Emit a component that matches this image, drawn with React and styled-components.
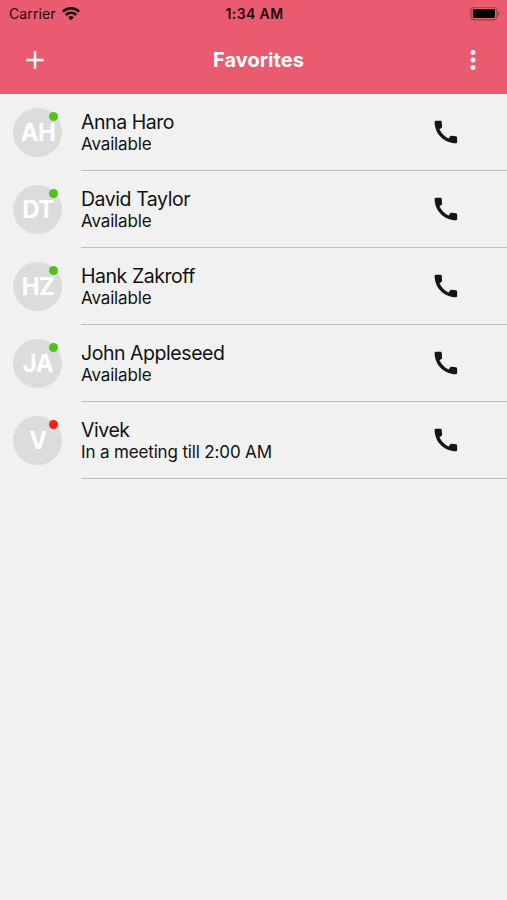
import React from 'react'
import styled, { createGlobalStyle } from 'styled-components';
import { MdAdd, MdMoreVert } from 'react-icons/md';

const GlobalStyle = createGlobalStyle`
  * {
    box-sizing: border-box;
  }

  body {
    margin: 0;
    background: #f1f1f1;
    font-family: Inter, "Liberation Sans", sans-serif;
  }

  p, h1, ul {
    margin: 0;
    padding: 0;
  }
`;

const Screen = styled.div`
  width: 507px;
  min-height: 900px;
  background: #f1f1f1;
  color: #111;
`;

const Header = styled.header`
  height: 94px;
  background: #ea5b70;
`;

const StatusBar = styled.div`
  display: grid;
  grid-template-columns: 1fr auto 1fr;
  align-items: center;
  height: 27px;
  padding: 0 7px 0 9px;
  color: #1c0a0d;
  font-size: 14px;
  line-height: 18px;
`;

const Carrier = styled.div`
  display: flex;
  align-items: center;
  gap: 6px;
  letter-spacing: 0.1px;
`;

const Time = styled.div`
  font-weight: 600;
  letter-spacing: 0.4px;
`;

const Battery = styled.svg`
  justify-self: end;
`;

const Toolbar = styled.div`
  display: grid;
  grid-template-columns: 30px 1fr 30px;
  align-items: center;
  height: 65px;
  padding: 0 19px 0 20px;
  color: #fff;
`;

const Title = styled.h1`
  padding-left: 9px;
  font-size: 20px;
  font-weight: 700;
  letter-spacing: 0.05px;
  line-height: 26px;
  text-align: center;
`;

const IconButton = styled.button`
  display: flex;
  padding: 0;
  border: 0;
  background: none;
  color: inherit;

  svg {
    width: 30px;
    height: 30px;
  }
`;

const List = styled.ul`
  list-style: none;
`;

const Row = styled.li`
  display: flex;
  height: 77px;
  padding-left: 13px;
`;

const Avatar = styled.div`
  position: relative;
  display: flex;
  align-items: center;
  justify-content: center;
  width: 49px;
  height: 49px;
  margin: 14px 19px 0 0;
  padding-left: 1px;
  border-radius: 50%;
  background: #dcdcdc;
  color: #fff;
  font-size: 24px;
  font-weight: 700;
  letter-spacing: -0.6px;
`;

const Presence = styled.span`
  position: absolute;
  top: 4px;
  right: 4px;
  width: 9px;
  height: 9px;
  border-radius: 50%;
  background: ${({ $busy }) => ($busy ? '#fd1d12' : '#4fc31c')};
`;

const Details = styled.div`
  display: flex;
  flex: 1;
  justify-content: space-between;
  padding: 16px 46.5px 0 0;
  border-bottom: 1px solid #bdbdbd;
`;

const Name = styled.p`
  font-size: 19.5px;
  letter-spacing: -0.45px;
  line-height: 24px;
`;

const Status = styled.p`
  font-size: 17px;
  letter-spacing: -0.15px;
  line-height: 21px;
`;

const CallButton = styled(IconButton)`
  align-self: flex-start;
  margin-top: 7px;
  color: #161616;
`;

const contacts = [
  { initials: 'AH', name: 'Anna Haro', status: 'Available' },
  { initials: 'DT', name: 'David Taylor', status: 'Available' },
  { initials: 'HZ', name: 'Hank Zakroff', status: 'Available' },
  { initials: 'JA', name: 'John Appleseed', status: 'Available' },
  { initials: 'V', name: 'Vivek', status: 'In a meeting till 2:00 AM', busy: true },
];

const WifiIcon = () => (
  <svg width="18" height="14" viewBox="0 0 18 14" fill="none" stroke="#14060a" strokeWidth="2.5">
    <path d="M0.9 4.6a11.6 11.6 0 0 1 16.2 0" />
    <path d="M3.8 8a7.4 7.4 0 0 1 10.4 0" />
    <path d="M6.2 10.4a4 4 0 0 1 5.6 0L9 13.3z" fill="#14060a" stroke="none" />
  </svg>
)

const BatteryIcon = () => (
  <Battery width="30" height="14" viewBox="0 0 30 14">
    <rect x="0.9" y="0.1" width="26" height="12.8" rx="3.8" fill="none" stroke="#94404d" strokeWidth="1.2" />
    <rect x="2.9" y="1.9" width="22" height="9.2" rx="1.4" fill="#000" />
    <path d="M27.8 4.2a2.5 2.5 0 0 1 0 4.6z" fill="#94404d" />
  </Battery>
)

const PhoneIcon = () => (
  <svg viewBox="0 0 24 24" fill="currentColor">
    <path d="M2.9 4Q2.9 3 3.9 3H7.7Q8.5 3 8.6 3.9L8.9 7.5Q8.9 8.3 8.3 8.8L6.8 9.8C8.3 13 11 15.8 14.2 17.2L15.2 15.6Q15.6 14.9 16.4 15L20 15.3Q20.9 15.4 20.9 16.3V20Q20.9 21 19.9 21C10.5 21 2.9 13.4 2.9 4z" />
  </svg>
)

const App = () => {
  return (
    <Screen>
      <GlobalStyle />
      <Header>
        <StatusBar>
          <Carrier>
            <span>Carrier</span>
            <WifiIcon />
          </Carrier>
          <Time>1:34 AM</Time>
          <BatteryIcon />
        </StatusBar>
        <Toolbar>
          <IconButton aria-label="Add"><MdAdd /></IconButton>
          <Title>Favorites</Title>
          <IconButton aria-label="More"><MdMoreVert /></IconButton>
        </Toolbar>
      </Header>

      <List>
        {contacts.map((item) => (
          <Row key={item.name}>
            <Avatar>
              {item.initials}
              <Presence $busy={item.busy} />
            </Avatar>
            <Details>
              <div>
                <Name>{item.name}</Name>
                <Status>{item.status}</Status>
              </div>
              <CallButton aria-label="Call"><PhoneIcon /></CallButton>
            </Details>
          </Row>
        ))}
      </List>
    </Screen>
  )
}

export default App
